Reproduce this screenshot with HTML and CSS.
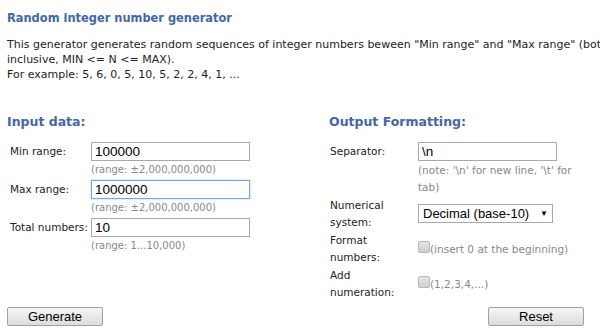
FILE: index.html
```html
<!DOCTYPE html>
<html lang="en">
<head>
    <meta charset="UTF-8">
    <title>Random integer number generator</title>
    <link rel="stylesheet" href="styles.css">
</head>
<body>
    <h1 class="title">Random integer number generator</h1>
    <p class="intro">
        This generator generates random sequences of integer numbers beween "Min range" and "Max range" (both<br>
        inclusive, MIN &lt;= N &lt;= MAX).<br>
        For example: 5, 6, 0, 5, 10, 5, 2, 2, 4, 1, ...
    </p>

    <form class="generator">
        <div class="panel panel-input">
            <h2 class="panel-title">Input data:</h2>
            <div class="fields">
                <label class="field-label" for="min">Min range:</label>
                <div class="field">
                    <input type="text" id="min" value="100000">
                    <span class="hint">(range: &plusmn;2,000,000,000)</span>
                </div>
                <label class="field-label" for="max">Max range:</label>
                <div class="field">
                    <input type="text" id="max" class="focused" value="1000000">
                    <span class="hint">(range: &plusmn;2,000,000,000)</span>
                </div>
                <label class="field-label" for="total">Total numbers:</label>
                <div class="field">
                    <input type="text" id="total" value="10">
                    <span class="hint">(range: 1...10,000)</span>
                </div>
            </div>
        </div>

        <div class="panel panel-output">
            <h2 class="panel-title">Output Formatting:</h2>
            <div class="fields fields-output">
                <label class="field-label" for="sep">Separator:</label>
                <div class="field">
                    <input type="text" id="sep" value="\n">
                    <span class="hint note">(note: '\n' for new line, '\t' for tab)</span>
                </div>
                <label class="field-label" for="base">Numerical system:</label>
                <div class="field">
                    <div class="select" id="base">Decimal (base-10)<span class="arrow">&#9660;</span></div>
                </div>
                <label class="field-label">Format numbers:</label>
                <div class="field check-row">
                    <span class="checkbox"></span><span class="hint">(insert 0 at the beginning)</span>
                </div>
                <label class="field-label">Add numeration:</label>
                <div class="field check-row">
                    <span class="checkbox"></span><span class="hint">(1,2,3,4,...)</span>
                </div>
            </div>
        </div>

        <div class="actions">
            <button type="button" class="btn">Generate</button>
            <button type="reset" class="btn">Reset</button>
        </div>
    </form>
</body>
</html>
```

FILE: styles.css
```css
body {
    margin: 0;
    padding: 0 7px;
    font-family: "DejaVu Sans", Verdana, sans-serif;
    font-size: 11px;
    color: #222;
    background-color: #fff;
    overflow: hidden;
}
.title {
    margin: 8px 0 0;
    font-family: "DejaVu Sans Condensed", "DejaVu Sans", sans-serif;
    font-size: 12.7px;
    font-weight: bold;
    color: #4466aa;
    line-height: 20px;
    white-space: nowrap;
}
.intro {
    margin: 9px 0 0;
    line-height: 15px;
    white-space: nowrap;
}
.generator {
    display: grid;
    grid-template-columns: 322px 1fr;
    margin-top: 31px;
}
.panel-title {
    margin: 0 0 11px;
    font-size: 12.5px;
    font-weight: bold;
    color: #4466aa;
    line-height: 18px;
    white-space: nowrap;
}
.fields {
    display: grid;
    grid-template-columns: 81px 159px;
    margin-left: 3px;
}
.fields-output {
    grid-template-columns: 88px 160px;
    margin-left: 1px;
}
.field-label {
    font-size: 10.5px;
    line-height: 17px;
    padding-top: 1px;
}
.panel-input .field-label {
    white-space: nowrap;
}
.field {
    display: flex;
    flex-direction: column;
    align-items: flex-start;
}
.fields input[type="text"] {
    box-sizing: border-box;
    width: 159px;
    height: 19px;
    margin: 0;
    padding: 0 3px;
    border: 1px solid #a9a9a9;
    font-family: "Liberation Sans", Arial, sans-serif;
    font-size: 13.5px;
    color: #000;
    outline: none;
}
.fields-output input[type="text"] {
    width: 139px;
}
.fields input.focused {
    border-color: #7aa6dc;
    box-shadow: 0 0 2px #a9c6ee;
}
.hint {
    font-size: 10px;
    color: #888;
    line-height: 16px;
    padding-top: 1px;
    margin-bottom: 2px;
}
.note {
    font-size: 10.5px;
    line-height: 17px;
    margin-bottom: 0;
}
.select {
    box-sizing: border-box;
    width: 135px;
    height: 19px;
    margin-top: 8px;
    margin-bottom: 7px;
    padding: 0 4px;
    border: 1px solid #a9a9a9;
    font-family: "Liberation Sans", Arial, sans-serif;
    font-size: 13px;
    line-height: 17px;
    color: #000;
    display: flex;
    justify-content: space-between;
}
.arrow {
    font-size: 8px;
}
.check-row {
    flex-direction: row;
    align-items: flex-start;
    height: 35px;
    padding-top: 10px;
    box-sizing: border-box;
}
.check-row .hint {
    font-size: 10.5px;
    line-height: 14px;
    padding-top: 1px;
    margin: 0;
    white-space: nowrap;
}
.checkbox {
    display: inline-block;
    flex: none;
    width: 10px;
    height: 10px;
    border: 1px solid #b8b8b8;
    border-radius: 2px;
    background: linear-gradient(#e4e4e4, #cfcfcf);
}
.actions {
    grid-column: 1 / -1;
    width: 577px;
    display: flex;
    justify-content: space-between;
    margin-top: 6px;
}
.btn {
    width: 96px;
    height: 19px;
    padding: 0;
    border: 1px solid #a0a0a0;
    border-radius: 2px;
    background: linear-gradient(#f6f6f6, #dcdcdc);
    font-family: "Liberation Sans", Arial, sans-serif;
    font-size: 13px;
    color: #000;
}
```
